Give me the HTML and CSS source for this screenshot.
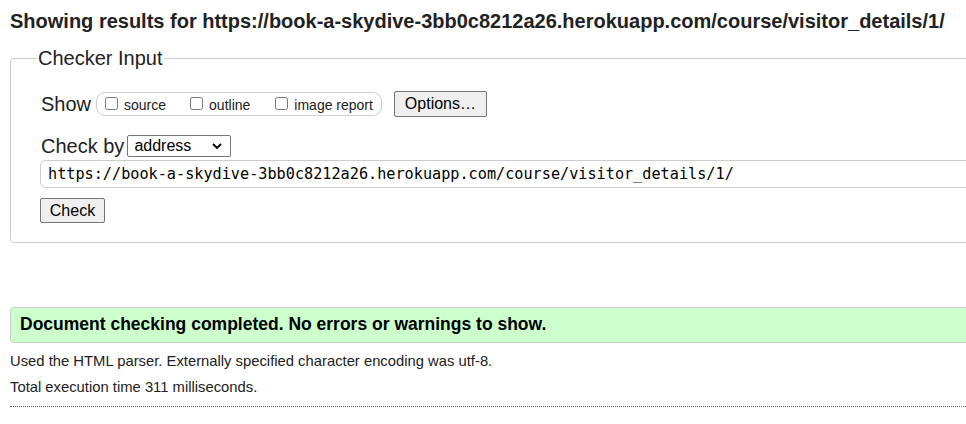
FILE: index.html
```html
<!DOCTYPE html>
<html lang="en">
<head>
<meta charset="utf-8">
<title>Showing results for https://book-a-skydive-3bb0c8212a26.herokuapp.com/course/visitor_details/1/ - Nu Html Checker</title>
<link rel="stylesheet" href="styles.css">
</head>
<body>
<div class="page">
  <h2 class="title">Showing results for https://book-a-skydive-3bb0c8212a26.herokuapp.com/course/visitor_details/1/</h2>
  <form class="checker">
    <fieldset class="checker-input">
      <legend class="legend">Checker Input</legend>
      <div class="row show-row">
        <span class="row-label">Show</span>
        <span class="opts">
          <label class="opt opt-source"><input class="cb" type="checkbox"><span>source</span></label>
          <label class="opt opt-outline"><input class="cb" type="checkbox"><span>outline</span></label>
          <label class="opt opt-image"><input class="cb" type="checkbox"><span>image report</span></label>
        </span>
        <button type="button" class="btn btn-options">Options…</button>
      </div>
      <div class="row by-row">
        <span class="row-label">Check by</span>
        <span class="select-wrap">
          <select class="select"><option>address</option></select>
          <svg class="chevron" width="10" height="6" viewBox="0 0 10 6" aria-hidden="true"><path d="M1 1 L5 5 L9 1" fill="none" stroke="#000" stroke-width="1.8"/></svg>
        </span>
      </div>
      <input class="doc" type="url" value="https://book-a-skydive-3bb0c8212a26.herokuapp.com/course/visitor_details/1/">
      <div class="submit-row">
        <button type="button" class="btn btn-check">Check</button>
      </div>
    </fieldset>
  </form>
  <div class="success"><p class="success-text">Document checking completed. No errors or warnings to show.</p></div>
  <p class="details">Used the HTML parser. Externally specified character encoding was utf-8.</p>
  <p class="details details-time">Total execution time 311 milliseconds.</p>
  <hr class="rule">
</div>
</body>
</html>
```
FILE: styles.css
```css
html, body {
  margin: 0;
  padding: 0;
  overflow: hidden;
  background: #fff;
}
body {
  font-family: "Liberation Sans", Arial, sans-serif;
  color: #222;
}
.page {
  width: 1300px;
  padding: 0 10px;
}
.title {
  margin: 10px 0 0;
  font-size: 20px;
  line-height: 22px;
  font-weight: bold;
  color: #222;
  white-space: nowrap;
}
.checker {
  margin: 14px 0 0;
}
.checker-input {
  margin: 0;
  padding: 21px 29px 19px;
  border: 1px solid #ccc;
  border-radius: 4px;
  min-width: 0;
}
.legend {
  font-size: 20px;
  line-height: 24px;
  padding: 0 1px;
  margin-left: -3px;
  color: #222;
}
.row {
  display: flex;
  align-items: center;
}
.row-label {
  font-size: 20px;
  line-height: 24px;
  margin-left: 1px;
}
.show-row {
  height: 26px;
}
.opts {
  display: flex;
  align-items: center;
  height: 22px;
  margin-left: 5px;
  padding: 0 8px 0 8px;
  border: 1px solid #ccc;
  border-radius: 9px;
}
.opt {
  display: inline-flex;
  align-items: center;
  font-size: 14px;
  line-height: 16px;
  padding-top: 2px;
}
.opt-outline { margin-left: 24px; }
.opt-image { margin-left: 25px; }
.cb {
  width: 13px;
  height: 13px;
  margin: 0 6px 4px 0;
}
.btn {
  font-family: "Liberation Sans", Arial, sans-serif;
  font-size: 16px;
  color: #000;
  background: #efefef;
  border: 1px solid #767676;
  border-radius: 2px;
  padding: 0;
}
.btn-options {
  margin-left: 12px;
  width: 93px;
  height: 26px;
}
.by-row {
  margin-top: 18px;
  height: 22px;
}
.select-wrap {
  position: relative;
  display: inline-flex;
  margin-left: 3px;
}
.select {
  appearance: none;
  -webkit-appearance: none;
  width: 104px;
  height: 22px;
  font-family: "Liberation Sans", Arial, sans-serif;
  font-size: 16px;
  line-height: 20px;
  color: #000;
  background: #fff;
  border: 1px solid #767676;
  border-radius: 2px;
  padding: 0 0 0 6px;
  margin: 0;
}
.chevron {
  position: absolute;
  right: 9px;
  top: 8px;
  pointer-events: none;
}
.doc {
  display: block;
  box-sizing: border-box;
  margin-top: 3px;
  width: 1260px;
  height: 28px;
  padding: 0 7px;
  font-family: "DejaVu Sans Mono", "Liberation Mono", monospace;
  font-size: 15.2px;
  color: #000;
  border: 1px solid #ccc;
  border-radius: 6px;
  background: #fff;
}
.submit-row {
  margin-top: 10px;
  display: flex;
}
.btn-check {
  width: 65px;
  height: 25px;
}
.success {
  margin-top: 64px;
  border: 1px solid #ccc;
  border-radius: 4px;
  background: #ccffcc;
  padding: 7px 9px 9px;
}
.success-text {
  margin: 0;
  font-size: 17.5px;
  line-height: 18px;
  font-weight: bold;
  color: #000;
}
.details {
  margin: 9px 0 0;
  font-size: 14.8px;
  line-height: 18px;
  color: #222;
}
.details-time {
  margin-top: 8px;
}
.rule {
  margin: 10px 0 0;
  border: 0;
  border-top: 1px dotted #666;
  height: 0;
}
```
